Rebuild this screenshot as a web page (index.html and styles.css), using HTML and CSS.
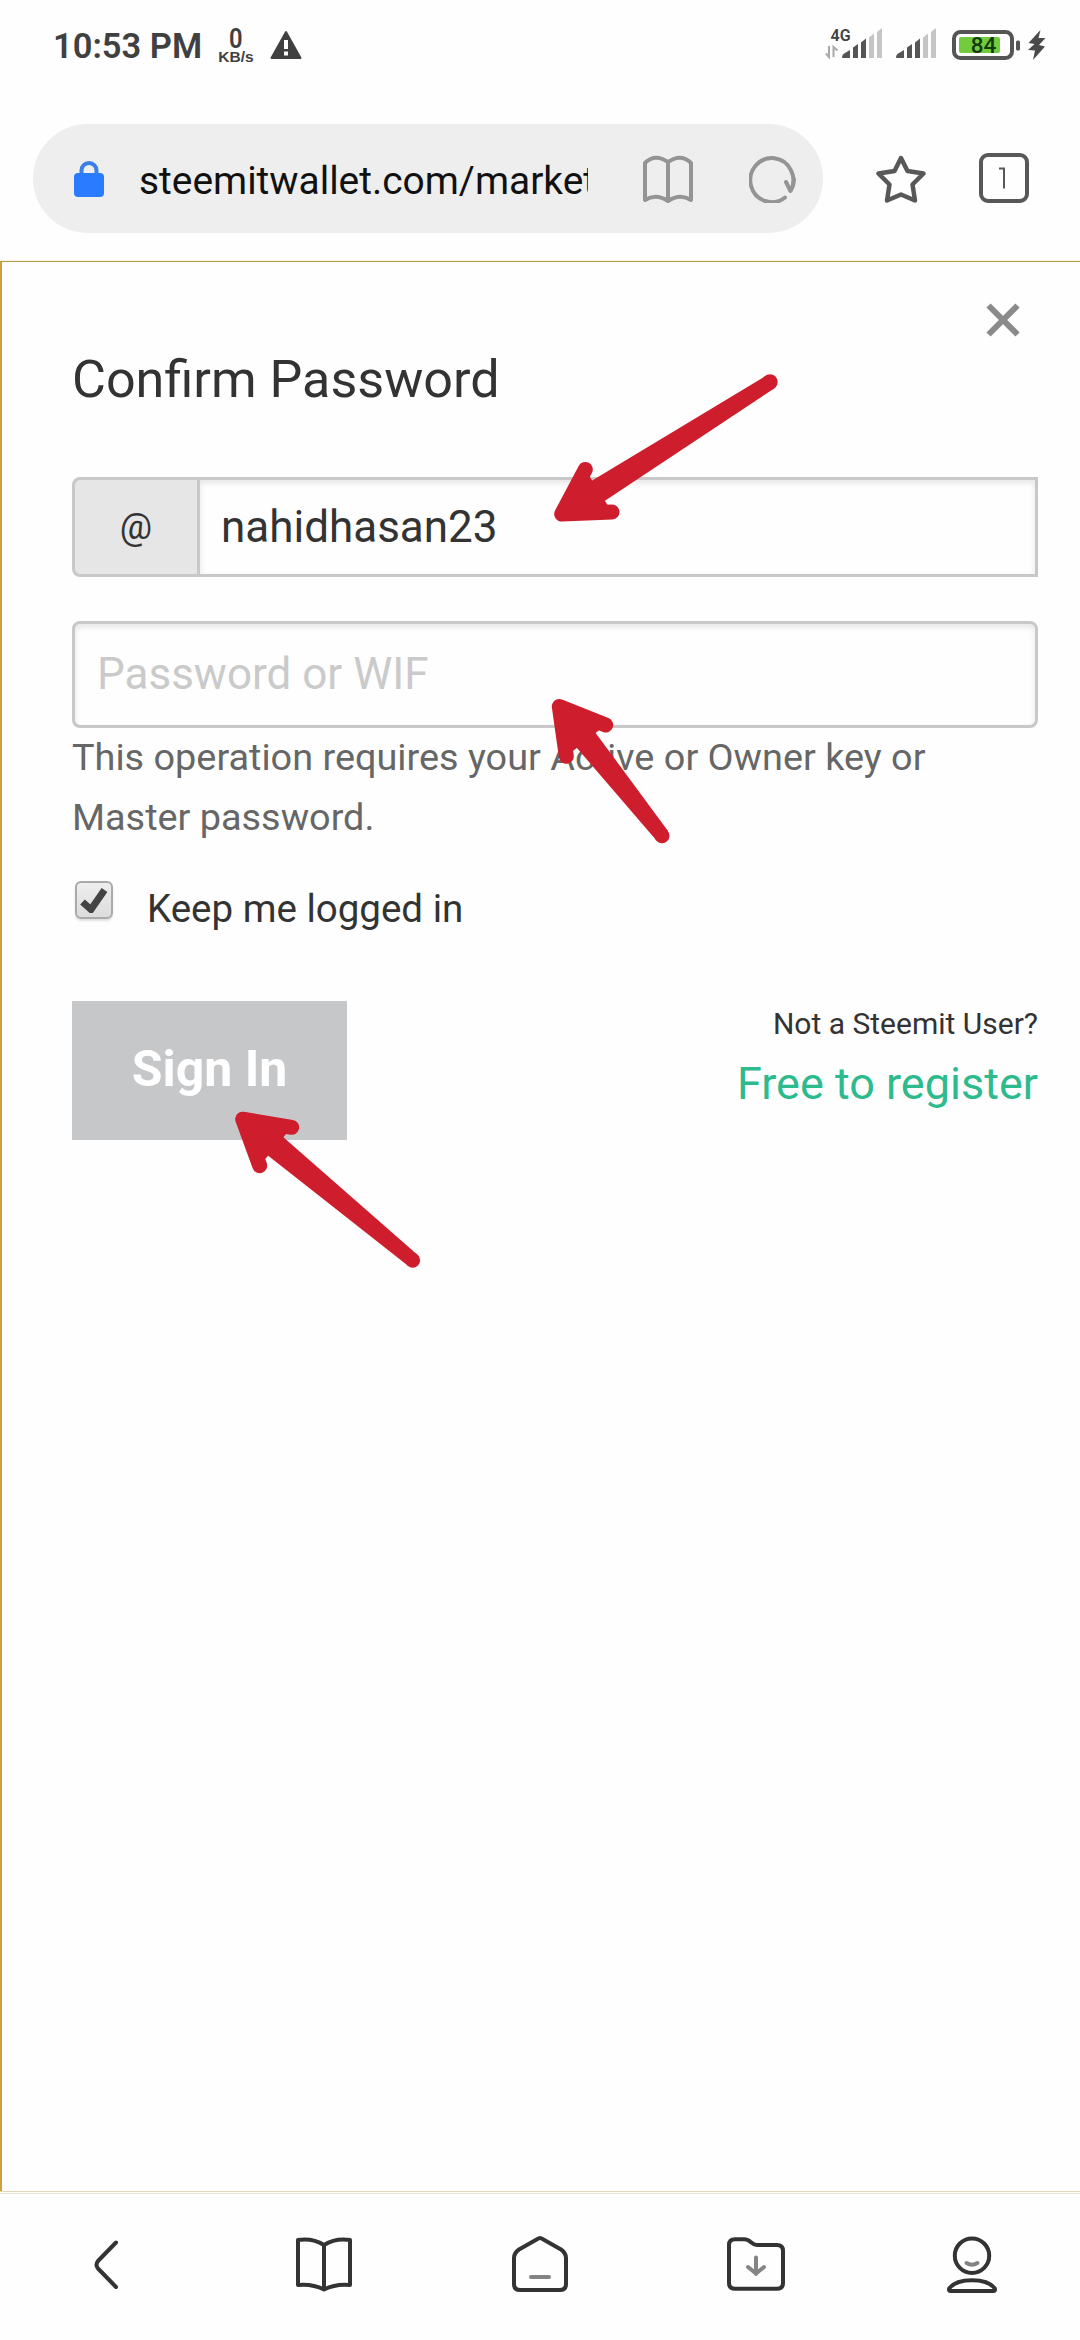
FILE: index.html
```html
<!DOCTYPE html>
<html lang="en">
<head>
<meta charset="utf-8">
<title>Confirm Password</title>
<link rel="stylesheet" href="styles.css">
</head>
<body>
<div class="screen">
  <header class="status">
    <span class="time">10:53 PM</span>
    <span class="speed"><span class="speed-value">0</span><span class="speed-unit">KB/s</span></span>
    <svg class="warning" width="32" height="30" viewBox="0 0 32 30"><path d="M16 2 30.500 28H1.500Z" fill="#404040" stroke="#404040" stroke-width="2" stroke-linejoin="round"/><path d="M16 10v9M16 21.500v4" stroke="#fff" stroke-width="4"/></svg>
    <span class="spacer"></span>
    <svg class="signal-data" width="57" height="34" viewBox="0 0 57 34">
      <text class="net" x="5.500" y="14.500">4G</text>
      <path d="M4 20v11L1 27.500M8.500 31V21l4 3.500" fill="none" stroke="#a9a9a9" stroke-width="2"/>
      <path d="M17 31.500q0-3 3-4.500l5-3v8h-7zM28 21.500l5-3.500v14h-5zM36 16.500l5-4v19.500h-5z" fill="#555"/>
      <path d="M44 11.500l5-4v24.500h-5zM52 6l5-4v30h-5z" fill="#c5c5c5"/>
    </svg>
    <svg class="signal" width="40" height="34" viewBox="17 0 40 34">
      <path d="M17 31.500q0-3 3-4.500l5-3v8h-7zM28 21.500l5-3.500v14h-5zM36 16.500l5-4v19.500h-5z" fill="#555"/>
      <path d="M44 11.500l5-4v24.500h-5zM52 6l5-4v30h-5z" fill="#c5c5c5"/>
    </svg>
    <svg class="battery" width="68" height="30" viewBox="0 0 68 30">
      <rect x="2" y="2" width="58" height="26" rx="6.500" fill="#fff" stroke="#555" stroke-width="4"/>
      <rect x="7" y="7" width="41" height="16" rx="2" fill="#72cc3e"/>
      <rect x="64" y="10.500" width="4" height="10" rx="1.500" fill="#555"/>
      <text class="charge" x="31.500" y="23" text-anchor="middle">84</text>
    </svg>
    <svg class="bolt" width="18" height="30" viewBox="0 0 18 30"><path d="M12.500 0 .500 13l6 1L0 20l7 .500L5 30 17 16.500l-6-1.500 6.500-7h-7Z" fill="#4a4a4a"/></svg>
  </header>

  <div class="toolbar">
    <div class="address">
      <svg class="lock" width="30" height="38" viewBox="0 0 30 38"><path d="M7.500 16v-5.500a7.500 7.500 0 0 1 15 0V16" fill="none" stroke="#3b7fe8" stroke-width="4"/><rect y="13" width="30" height="24" rx="4" fill="#2a7bff"/></svg>
      <span class="url">steemitwallet.com/market</span>
      <svg class="reader" width="50" height="48" viewBox="0 0 50 48" fill="none" stroke="#949494" stroke-width="4" stroke-linejoin="round"><path d="M2 45V8Q12-2 25 7Q38-2 48 8V45Q37 38 25 46Q13 38 2 45ZM25 7V46"/></svg>
      <svg class="reload" width="48" height="48" viewBox="0 0 48 48" fill="none" stroke="#949494" stroke-width="4" stroke-linecap="round" stroke-linejoin="round"><path d="M36 42.500A21.500 22 0 1 1 41.500 36L37 27M41.500 36Q45 30 45 24"/></svg>
    </div>
    <svg class="star" width="50" height="48" viewBox="0 0 50 48"><path d="M25 3 31.500 16 47.500 18.500 36.500 29.500 39 45.500 25 39.500 11 45.500 13.500 29.500 2.500 18.500 18.500 16Z" fill="none" stroke="#585858" stroke-width="4.500" stroke-linejoin="round"/></svg>
    <div class="tabs"><svg width="10" height="22" viewBox="0 0 10 22"><path d="M1 1.500H6V21.500" fill="none" stroke="#585858" stroke-width="2"/></svg></div>
  </div>

  <main class="modal">
    <svg class="close" width="34" height="34" viewBox="0 0 34 34"><path d="M2.500 2.500 31.500 31.500M31.500 2.500 2.500 31.500" stroke="#8a8a8a" stroke-width="6"/></svg>
    <h1 class="title">Confirm Password</h1>
    <div class="user-field"><span class="prefix">@</span><span class="user-value">nahidhasan23</span></div>
    <div class="password-field">Password or WIF</div>
    <p class="hint">This operation requires your Active or Owner key or<br>Master password.</p>
    <label class="keep">
      <span class="checkbox"><svg width="28" height="26" viewBox="0 0 28 26"><path d="M2.500 15 11 22.500 24.500 3" fill="none" stroke="#444" stroke-width="7"/></svg></span>
      <span class="keep-text">Keep me logged in</span>
    </label>
    <div class="actions">
      <div class="signin">Sign In</div>
      <div class="register"><span class="question">Not a Steemit User?</span><span class="link">Free to register</span></div>
    </div>
  </main>

  <nav class="bottom">
    <svg width="60" height="60" viewBox="0 0 60 60"><path d="M38 7.500 20 26Q17 30 20 33.500L38 52" stroke-width="4"/></svg>
    <svg width="60" height="60" viewBox="0 0 60 60"><path d="M4 5Q19 3 30 10Q41 3 56 5V50Q42 48.500 30 54.500Q18 48.500 4 50ZM30 10V54" stroke-width="4"/></svg>
    <svg width="60" height="60" viewBox="0 0 60 60"><path d="M27.500 4Q30 2 32.500 4L51 14.500Q56 18 56 23V49Q56 55 50 55H10Q4 55 4 49V23Q4 18 9 14.500Z" stroke-width="4"/><path class="soft" d="M21 42H39" stroke-width="4"/></svg>
    <svg width="60" height="60" viewBox="0 0 60 60"><path d="M3 10Q3 4.300 9 4.300H18Q22 4.300 25 7.300 28 10 31 10H51Q57 10 57 16V48Q57 53.800 51 53.800H9Q3 53.800 3 48Z" stroke-width="4"/><path class="soft" d="M30 22.500V39M22 32 30 38.500 38 32" stroke-width="4"/></svg>
    <svg width="60" height="60" viewBox="0 0 60 60"><circle cx="30" cy="20.700" r="17.200" stroke-width="4"/><path class="soft" d="M24.500 28Q30 31.500 35.500 28" stroke-width="4"/><path d="M9 56Q6 56 7.500 53 14 45.300 30 45.300T52.500 53Q54 56 51 56Z" stroke-width="4"/></svg>
  </nav>

  <svg class="arrows" width="1080" height="2340" viewBox="0 0 1080 2340">
    <g><path class="shaft" d="M561.700 514 589.300 482.300 766.300 375.500 774.500 388.300 602.700 502.300Z"/><circle class="shaft" cx="770" cy="382" r="7.700"/><path class="head" d="M585.300 469.500 561.700 514 612 512"/></g>
    <g><path class="shaft" d="M559 706 594 730.700 668 831 656.500 840.500 575 745.700Z"/><circle class="shaft" cx="662" cy="835.700" r="7.500"/><path class="head" d="M605.700 725 559.300 706.500 566.300 756.200"/></g>
    <g><path class="shaft" d="M242.700 1119 281.700 1135.700 417.700 1255 408 1265.700 266 1154Z"/><circle class="shaft" cx="412.700" cy="1260.300" r="7.400"/><path class="head" d="M291.700 1127.300 242.700 1119.200 259.700 1165.700"/></g>
  </svg>
</div>
</body>
</html>
```
FILE: styles.css
```css
* { box-sizing: border-box; }
body { margin: 0; font-family: Roboto, sans-serif; color: #333; }
.screen { position: relative; width: 1080px; height: 2340px; display: flex; flex-direction: column; background: #fefefe; overflow: hidden; }
svg { display: block; flex: none; }

.status { height: 90px; display: flex; align-items: center; padding: 0 34px 0 53px; color: #404040; }
.time { font-size: 34.500px; font-weight: 600; line-height: 40px; white-space: nowrap; width: 165px; padding-top: 2px; }
.speed { width: 36px; margin-right: 16px; display: flex; flex-direction: column; align-items: center; font-weight: 700; }
.speed-value { font-size: 27px; line-height: 22px; padding-top: 2px; font-weight: 600; transform: scaleX(0.880); }
.speed-unit { font-family: "Liberation Sans", sans-serif; font-size: 15.500px; line-height: 14px; }
.spacer { flex: 1; }
.signal-data, .signal { margin-right: 14px; margin-top: -5px; }
.signal { margin-right: 16px; }
.battery { margin-right: 8px; }
.net { font-size: 16px; font-weight: 600; fill: #404040; }
.charge { font-size: 22.500px; fill: #123a0c; font-weight: 500; }

.toolbar { height: 171px; padding: 34px 51px 28px 33px; display: flex; align-items: flex-start; }
.address { width: 790px; height: 109px; border-radius: 55px; background: #eee; display: flex; align-items: center; padding: 0 26px 0 41px; }
.lock { margin-right: 35px; }
.url { width: 449px; margin-right: 55px; overflow: hidden; white-space: nowrap; font-size: 38.900px; line-height: 60px; padding-top: 4px; color: #111; }
.reader { margin-right: 56px; }
.star { margin: 31px 53px 0 53px; }
.tabs { width: 50px; height: 50px; margin-top: 29px; border: 4px solid #585858; border-radius: 9px; display: flex; align-items: center; justify-content: center; }
.tabs svg { margin-right: 2px; }

.modal { height: 1930px; border-top: 1px solid #b39a52; border-left: 2px solid #d0a040; padding: 41px 42px 0 70px; display: flex; flex-direction: column; box-shadow: 0 -1px #f8f2da; }
.close { align-self: flex-end; margin-right: 18px; }
.title { margin: 12px 0 0; font-size: 52.100px; line-height: 62px; font-weight: 400; white-space: nowrap; }
.user-field { margin-top: 66px; height: 100px; display: flex; }
.prefix { width: 125px; border: 3px solid #c8c8c8; border-right: 0; border-radius: 8px 0 0 8px; background: #e6e6e6; display: flex; align-items: center; justify-content: center; font-size: 36px; }
.user-value { flex: 1; border: 3px solid #c8c8c8; box-shadow: inset 0 3px 6px rgba(10, 10, 10, 0.100); padding-left: 21px; font-size: 44px; line-height: 94px; }
.password-field { margin-top: 44px; height: 107px; border: 3px solid #c8c8c8; border-radius: 8px; box-shadow: inset 0 3px 6px rgba(10, 10, 10, 0.100); padding-left: 22px; font-size: 44px; line-height: 101px; color: #cacaca; }
.hint { margin: -1px 0 0; font-size: 37.850px; line-height: 60px; color: #666; white-space: nowrap; }
.keep { margin-top: 29px; height: 60px; display: flex; padding-left: 3px; }
.checkbox { width: 38px; height: 38px; margin-top: 5px; border: 2px solid #aaa; border-radius: 6px; background: linear-gradient(#eee, #dcdcdc); box-shadow: 0 2px 2px rgba(0, 0, 0, 0.120); display: flex; align-items: center; justify-content: center; }
.keep-text { margin-left: 34px; font-size: 38.500px; line-height: 66px; white-space: nowrap; }
.actions { margin-top: 65px; display: flex; justify-content: space-between; }
.signin { width: 275px; height: 139px; background: #c6c7c9; color: #fff; font-size: 50px; font-weight: 700; line-height: 136px; text-align: center; }
.register { display: flex; flex-direction: column; align-items: flex-end; white-space: nowrap; }
.question { font-size: 30px; line-height: 45px; }
.link { font-size: 45px; line-height: 75px; color: #2dba8c; }

.bottom { height: 149px; border-top: 1px solid #e2d6b8; box-shadow: inset 0 1px #fefefe, inset 0 2px #eee8d2; display: grid; grid-template-columns: repeat(5, 1fr); justify-items: center; padding-top: 43px; }
.bottom svg { fill: none; stroke: #333; stroke-linecap: round; stroke-linejoin: round; }
.bottom .soft { stroke: #848484; }

.arrows { position: absolute; left: 0; top: 0; pointer-events: none; }
.shaft { fill: #ce1d2c; }
.head { fill: #ce1d2c; stroke: #ce1d2c; stroke-width: 15px; stroke-linecap: round; stroke-linejoin: round; }
```
